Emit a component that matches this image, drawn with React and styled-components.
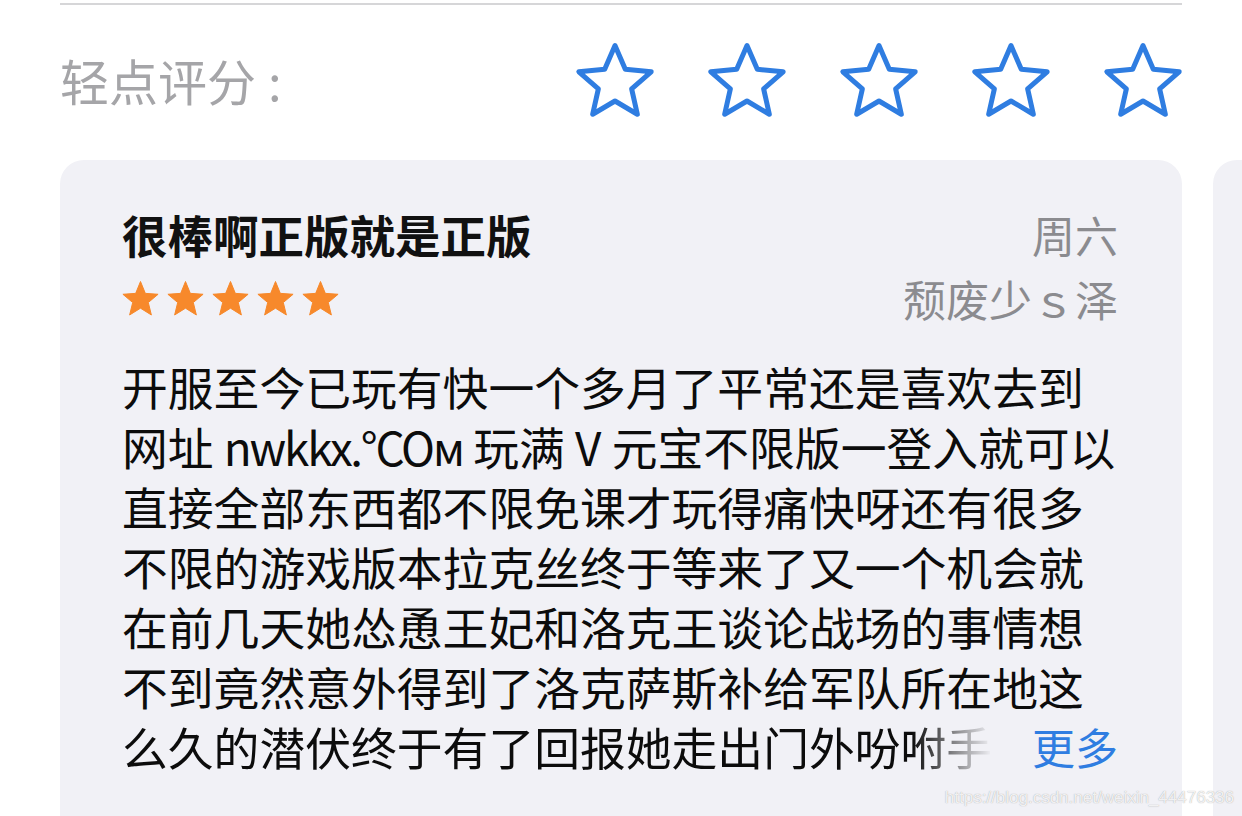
import React from "react";
import styled, { createGlobalStyle } from "styled-components";

const GlobalStyle = createGlobalStyle`
  html, body {
    margin: 0;
    padding: 0;
    background: #ffffff;
    overflow: hidden;
  }
  body {
    font-family: "Noto Sans CJK SC", "Noto Sans", sans-serif;
  }
`;

// 전체 페이지
const Page = styled.div`
  position: relative;
  width: 1242px;
  height: 816px;
  overflow: hidden;
  background: #ffffff;
`;

const Divider = styled.div`
  margin: 3px 60px 0;
  height: 2px;
  background: #d6d6d8;
`;

// 轻点评分 row
const RateRow = styled.div`
  height: 155px;
  margin: 0 59px 0 60px;
  display: flex;
  align-items: center;
  justify-content: space-between;
`;

const RateLabel = styled.div`
  font-size: 49px;
  color: #a5a5a8;
  margin-top: -6px;
  display: flex;
  align-items: center;
`;

const Colon = styled.span`
  margin-left: 12px;
`;

const RateStars = styled.div`
  display: flex;
  gap: 52px;
  margin-top: -5px;
`;

const Cards = styled.div`
  display: flex;
  gap: 31px;
  padding-left: 60px;
`;

const Card = styled.div`
  flex: 0 0 1122px;
  width: 1122px;
  min-width: 0;
  height: 700px;
  box-sizing: border-box;
  background: #f1f1f6;
  border-radius: 24px;
  padding: 44px 64px 0 62px;
  overflow: hidden;
`;

const Header = styled.div`
  display: flex;
  justify-content: space-between;
`;

const Col = styled.div`
  display: flex;
  flex-direction: column;
  align-items: ${(p) => (p.right ? "flex-end" : "flex-start")};
`;

const Title = styled.div`
  font-size: 45.5px;
  font-weight: 700;
  line-height: 60px;
  color: #111111;
`;

const Meta = styled.div`
  font-size: 43px;
  line-height: 64px;
  color: #8b8b8f;
  margin-top: ${(p) => (p.first ? "-2px" : "0")};
`;

const SmallStars = styled.div`
  display: flex;
  gap: 8px;
  margin-top: 17px;
`;

const Body = styled.div`
  margin-top: 26px;
  font-size: 45.8px;
  line-height: 60px;
  color: #0c0c0c;
`;

const Line = styled.div`
  white-space: nowrap;
`;

const Latin = styled.span`
  letter-spacing: -2.2px;
`;

const LastLine = styled.div`
  display: flex;
  white-space: nowrap;
`;

const FadeText = styled.span`
  width: 880px;
  overflow: hidden;
  -webkit-mask-image: linear-gradient(to right, #000 790px, transparent 870px);
  mask-image: linear-gradient(to right, #000 790px, transparent 870px);
`;

const More = styled.span`
  margin-left: auto;
  color: #2f7de1;
  font-size: 43px;
`;

const Watermark = styled.div`
  position: absolute;
  right: 8px;
  bottom: 8px;
  font-family: "Liberation Sans", Arial, sans-serif;
  font-size: 17px;
  color: rgba(255, 255, 255, 0.85);
  text-shadow: 0 0 1px rgba(120, 120, 120, 0.7);
`;

const starPoints = (cx, cy, R, r) => {
  const pts = [];
  for (let i = 0; i < 10; i++) {
    const a = ((-90 + i * 36) * Math.PI) / 180;
    const rad = i % 2 === 0 ? R : r;
    pts.push(`${(cx + rad * Math.cos(a)).toFixed(2)},${(cy + rad * Math.sin(a)).toFixed(2)}`);
  }
  return pts.join(" ");
};

const OutlineStar = () => (
  <svg width="80" height="76" viewBox="0 0 80 76">
    <polygon
      points={starPoints(40, 41.5, 38, 17.5)}
      fill="none"
      stroke="#2f7de1"
      strokeWidth="5"
      strokeLinejoin="round"
    />
  </svg>
);

const FilledStar = () => (
  <svg width="37" height="35" viewBox="0 0 37 35">
    <polygon
      points={starPoints(18.5, 19, 18.5, 8.2)}
      fill="#f7892b"
      stroke="#f7892b"
      strokeWidth="1"
      strokeLinejoin="round"
    />
  </svg>
);

const lines = [
  "开服至今已玩有快一个多月了平常还是喜欢去到",
  null,
  "直接全部东西都不限免课才玩得痛快呀还有很多",
  "不限的游戏版本拉克丝终于等来了又一个机会就",
  "在前几天她怂恿王妃和洛克王谈论战场的事情想",
  "不到竟然意外得到了洛克萨斯补给军队所在地这",
];

function App() {
  return (
    <Page>
      <GlobalStyle />
      <Divider />
      <RateRow>
        <RateLabel>
          轻点评分<Colon>:</Colon>
        </RateLabel>
        <RateStars>
          {[0, 1, 2, 3, 4].map((i) => (
            <OutlineStar key={i} />
          ))}
        </RateStars>
      </RateRow>
      <Cards>
        <Card>
          <Header>
            <Col>
              <Title>很棒啊正版就是正版</Title>
              <SmallStars>
                {[0, 1, 2, 3, 4].map((i) => (
                  <FilledStar key={i} />
                ))}
              </SmallStars>
            </Col>
            <Col right>
              <Meta first>周六</Meta>
              <Meta>颓废少ｓ泽</Meta>
            </Col>
          </Header>
          <Body>
            {lines.map((l, idx) =>
              l ? (
                <Line key={idx}>{l}</Line>
              ) : (
                <Line key={idx}>
                  网址 <Latin>nwkkx.°COм</Latin> 玩满 V 元宝不限版一登入就可以
                </Line>
              )
            )}
            <LastLine>
              <FadeText>么久的潜伏终于有了回报她走出门外吩咐手下</FadeText>
              <More>更多</More>
            </LastLine>
          </Body>
        </Card>
        <Card />
      </Cards>
      <Watermark>https://blog.csdn.net/weixin_44476336</Watermark>
    </Page>
  );
}

export default App;
